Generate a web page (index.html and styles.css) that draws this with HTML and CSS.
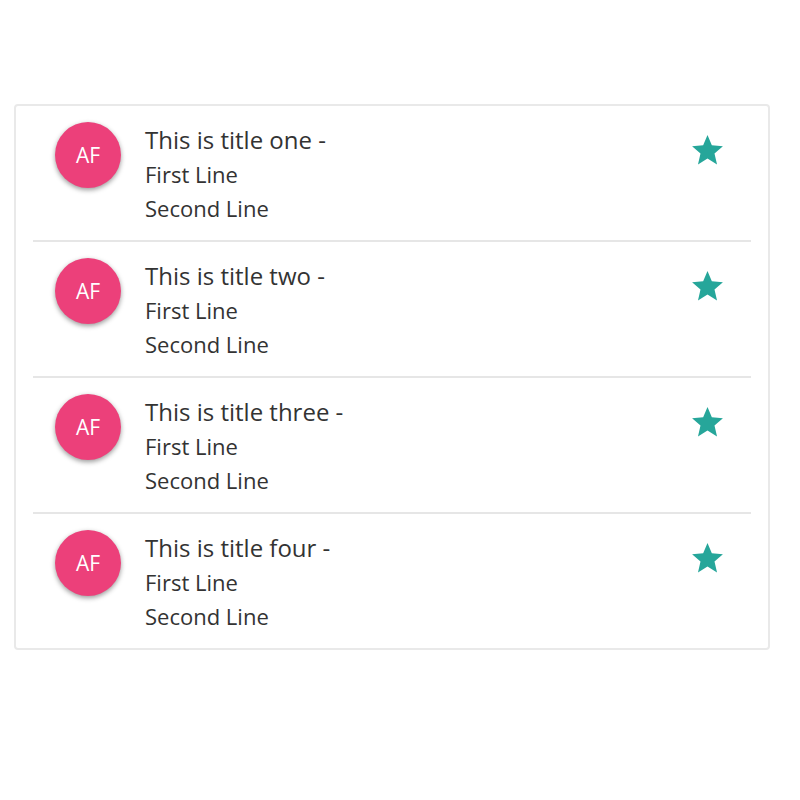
FILE: index.html
```html
<!DOCTYPE html>
<html lang="en">
<head>
<meta charset="utf-8">
<meta name="viewport" content="width=device-width, initial-scale=1">
<title>Collection</title>
<link rel="stylesheet" href="styles.css">
</head>
<body>
<svg class="sprite">
  <symbol id="star" viewBox="0 0 24 24"><path d="M12 17.27L18.18 21l-1.64-7.03L22 9.24l-7.19-.61L12 2 9.19 8.63 2 9.24l5.46 4.73L5.82 21z"/></symbol>
</svg>
<ul class="collection">
  <li class="item">
    <span class="avatar">AF</span>
    <div class="content"><h2 class="title">This is title one -</h2><p class="text">First Line<br>Second Line</p></div>
    <a class="action" href="#" aria-label="Favorite"><svg class="star"><use href="#star"/></svg></a>
  </li>
  <li class="item">
    <span class="avatar">AF</span>
    <div class="content"><h2 class="title">This is title two -</h2><p class="text">First Line<br>Second Line</p></div>
    <a class="action" href="#" aria-label="Favorite"><svg class="star"><use href="#star"/></svg></a>
  </li>
  <li class="item">
    <span class="avatar">AF</span>
    <div class="content"><h2 class="title">This is title three -</h2><p class="text">First Line<br>Second Line</p></div>
    <a class="action" href="#" aria-label="Favorite"><svg class="star"><use href="#star"/></svg></a>
  </li>
  <li class="item">
    <span class="avatar">AF</span>
    <div class="content"><h2 class="title">This is title four -</h2><p class="text">First Line<br>Second Line</p></div>
    <a class="action" href="#" aria-label="Favorite"><svg class="star"><use href="#star"/></svg></a>
  </li>
</ul>
</body>
</html>
```
FILE: styles.css
```css
* { box-sizing: border-box; }
body {
  margin: 0;
  padding: 104px 30px 104px 14px;
  background: #fff;
  color: #333;
  font-family: "Open Sans", "Noto Sans", sans-serif;
}
.sprite { display: none; }
.collection {
  margin: 0;
  padding: 0 17px;
  list-style: none;
  border: 2px solid #e9e9e9;
  border-radius: 4px;
}
.item {
  display: flex;
  align-items: flex-start;
  padding: 16px 25px 15px 22px;
}
.item + .item { border-top: 2px solid #e6e6e6; }
.avatar {
  display: flex;
  align-items: center;
  justify-content: center;
  width: 66px;
  height: 66px;
  margin-right: 24px;
  border-radius: 50%;
  background: #ec407a;
  color: #fff;
  font-size: 21px;
  box-shadow: 0 2px 5px rgba(0, 0, 0, 0.4);
}
.content { flex: 1; padding-top: 1px; }
.title, .text {
  margin: 0;
  font-weight: 400;
  line-height: 34px;
}
.title { font-size: 24px; }
.text { font-size: 22px; }
.action { padding-top: 10px; }
.star {
  display: block;
  width: 37px;
  height: 37px;
  fill: #26a69a;
}
```
